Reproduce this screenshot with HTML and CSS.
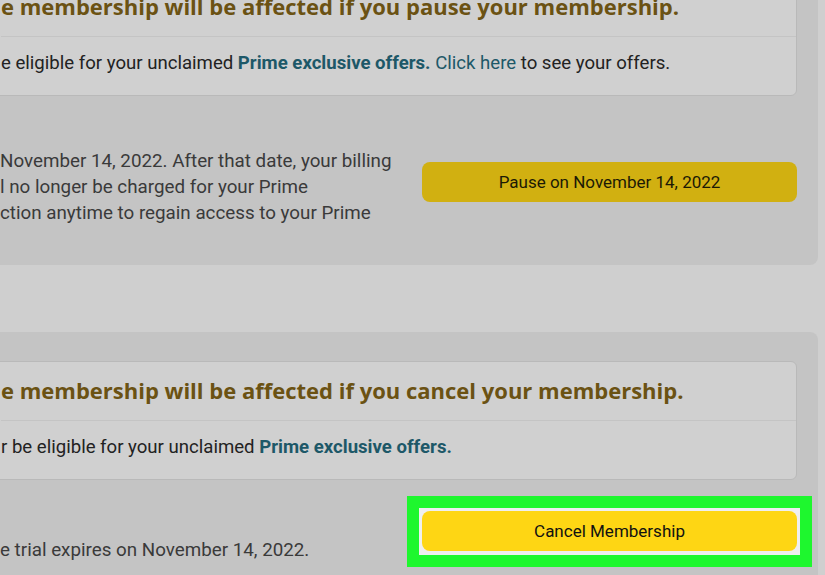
FILE: index.html
```html
<!DOCTYPE html>
<html lang="en">
<head>
    <meta charset="UTF-8">
    <meta name="viewport" content="width=device-width, initial-scale=1.0">
    <title>Manage Prime Membership</title>
    <link rel="stylesheet" href="styles.css">
</head>
<body>
<main class="page">
    <!-- Pause membership -->
    <section class="card card-pause">
        <div class="perks">
            <h3 class="perks-title">e membership will be affected if you pause your membership.</h3>
            <p class="perks-body">e eligible for your unclaimed <a href="#" class="offer">Prime exclusive offers.</a> <a href="#" class="plain-link">Click here</a> to see your offers.</p>
        </div>
        <div class="action-row">
            <p class="info">November 14, 2022. After that date, your billing<br>l no longer be charged for your Prime<br>ction anytime to regain access to your Prime</p>
            <div class="action">
                <button type="button" class="btn btn-pause">Pause on November 14, 2022</button>
            </div>
        </div>
    </section>

    <!-- Cancel membership -->
    <section class="card card-cancel">
        <div class="perks">
            <h3 class="perks-title">e membership will be affected if you cancel your membership.</h3>
            <p class="perks-body">r be eligible for your unclaimed <a href="#" class="offer">Prime exclusive offers.</a></p>
        </div>
        <div class="action-row">
            <p class="info">e trial expires on November 14, 2022.</p>
            <div class="action">
                <span class="highlight">
                    <button type="button" class="btn btn-cancel">Cancel Membership</button>
                </span>
            </div>
        </div>
    </section>
</main>
</body>
</html>
```

FILE: styles.css
```css
body {
    font-family: Roboto, "Liberation Sans", sans-serif;
    background-color: #cfcfcf;
    color: #222;
    margin: 0;
    padding: 0;
}

.page {
    padding-right: 7px;
}

.card {
    background-color: #c4c4c4;
    border-radius: 8px;
    margin-left: -20px;
    padding: 29px 21px 0 20px;
}

.card-pause {
    margin-top: -52px;
    padding-bottom: 39px;
}

.card-cancel {
    margin-top: 67px;
    padding-bottom: 30px;
}

.perks {
    background-color: #d0d0d0;
    border: 1px solid #b9b9b9;
    border-radius: 6px;
    margin-left: -12px;
    padding-left: 12px;
}

.perks-title {
    margin: 0;
    height: 58px;
    line-height: 56px;
    font-family: "Open Sans", Roboto, sans-serif;
    font-size: 22px;
    font-weight: bold;
    color: #6b5213;
    border-bottom: 1px solid #c4c4c4;
    white-space: nowrap;
}

.perks-body {
    margin: 0;
    height: 58px;
    line-height: 52px;
    font-size: 18.6px;
    color: #222;
    white-space: nowrap;
}

.offer {
    color: #1d5868;
    font-weight: bold;
    text-decoration: none;
}

.plain-link {
    color: #1d5868;
    text-decoration: none;
}

.action-row {
    display: grid;
    grid-template-columns: 1fr 375px;
    column-gap: 23px;
    align-items: start;
}

.info {
    margin: 52px 0 0;
    font-size: 18.8px;
    line-height: 26px;
    color: #3a3a3a;
    white-space: nowrap;
}

.card-cancel .info {
    margin-top: 57px;
}

.action {
    margin-top: 66px;
}

.card-cancel .action {
    margin-top: 31px;
}

.btn {
    display: block;
    width: 100%;
    height: 40px;
    border: none;
    border-radius: 8px;
    font-family: inherit;
    font-size: 17px;
    cursor: pointer;
}

.btn-pause {
    background-color: #d1b011;
    color: #1c1a05;
}

.btn-cancel {
    background-color: #fed614;
    color: #111;
}

.highlight {
    display: block;
    margin: -15px -15px -16px;
    padding: 3px 3px 4px;
    background-color: #efefef;
    border: 12px solid #1ef72e;
}
```
